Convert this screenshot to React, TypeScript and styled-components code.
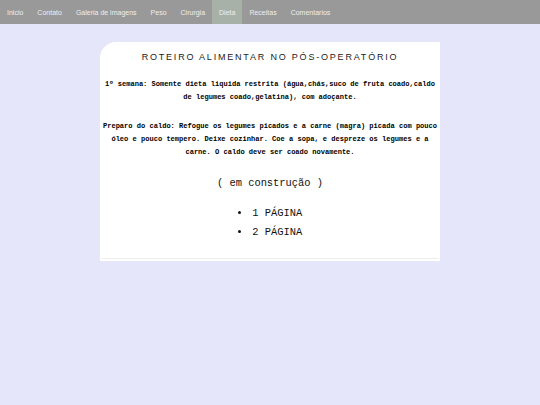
import React from "react";
import styled, { createGlobalStyle } from "styled-components";

const Global = createGlobalStyle`
  html, body { margin: 0; padding: 0; }
  body { background: #e6e6fa; font-family: "Liberation Sans", Arial, sans-serif; }
`;

const Nav = styled.nav`
  display: flex;
  height: 24px;
  background: #999999;
`;

const NavItem = styled.a<{ $active?: boolean }>`
  display: flex;
  align-items: center;
  padding: 0 7px;
  font-size: 7px;
  color: #eeeeee;
  text-decoration: none;
  background: ${(p) => (p.$active ? "#a8b1a8" : "transparent")};
`;

const Main = styled.main`
  display: flex;
  justify-content: center;
  padding-top: 18px;
`;

const Card = styled.section`
  width: 340px;
  background: #ffffff;
  border-top-left-radius: 16px;
  padding: 9px 2px 2px;
  box-sizing: border-box;
  text-align: center;
`;

const Title = styled.h1`
  margin: 0;
  font-family: "Liberation Sans", Arial, sans-serif;
  font-weight: normal;
  font-size: 9px;
  line-height: 12px;
  letter-spacing: 1.8px;
  color: #222;
`;

const Para = styled.p<{ $mt: number }>`
  margin: ${(p) => p.$mt}px 0 0;
  font-family: "Liberation Mono", "Courier New", monospace;
  font-weight: bold;
  font-size: 7.05px;
  line-height: 13px;
  color: #000;
`;

const Building = styled.p`
  margin: 17.5px 0 0;
  font-family: "Liberation Mono", "Courier New", monospace;
  font-size: 10.4px;
  line-height: 14px;
  color: #111;
`;

const List = styled.ul`
  margin: 13.5px 0 0;
  padding: 0;
  list-style: disc inside;
  font-family: "Liberation Mono", "Courier New", monospace;
  font-size: 10.4px;
  line-height: 19px;
  color: #111;
`;

const Rule = styled.hr`
  margin: 16px 0 0;
  border: none;
  border-top: 1px solid #ececec;
  height: 0;
`;

const items = ["Inicio", "Contato", "Galeria de imagens", "Peso", "Cirurgia", "Dieta", "Receitas", "Comentarios"];

export default function App() {
  return (
    <>
      <Global />
      <Nav>
        {items.map((t) => (
          <NavItem key={t} href="#" $active={t === "Dieta"}>
            {t}
          </NavItem>
        ))}
      </Nav>
      <Main>
        <Card>
          <Title>ROTEIRO ALIMENTAR NO PÓS-OPERATÓRIO</Title>
          <Para $mt={14.5}>
            1º semana: Somente dieta liquida restrita (água,chás,suco de fruta coado,caldo de legumes coado,gelatina), com adoçante.
          </Para>
          <Para $mt={16}>
            Preparo do caldo: Refogue os legumes picados e a carne (magra) picada com pouco óleo e pouco tempero. Deixe cozinhar. Coe a sopa, e despreze os legumes e a carne. O caldo deve ser coado novamente.
          </Para>
          <Building>( em construção )</Building>
          <List>
            <li>1 PÁGINA</li>
            <li>2 PÁGINA</li>
          </List>
          <Rule />
        </Card>
      </Main>
    </>
  );
}
